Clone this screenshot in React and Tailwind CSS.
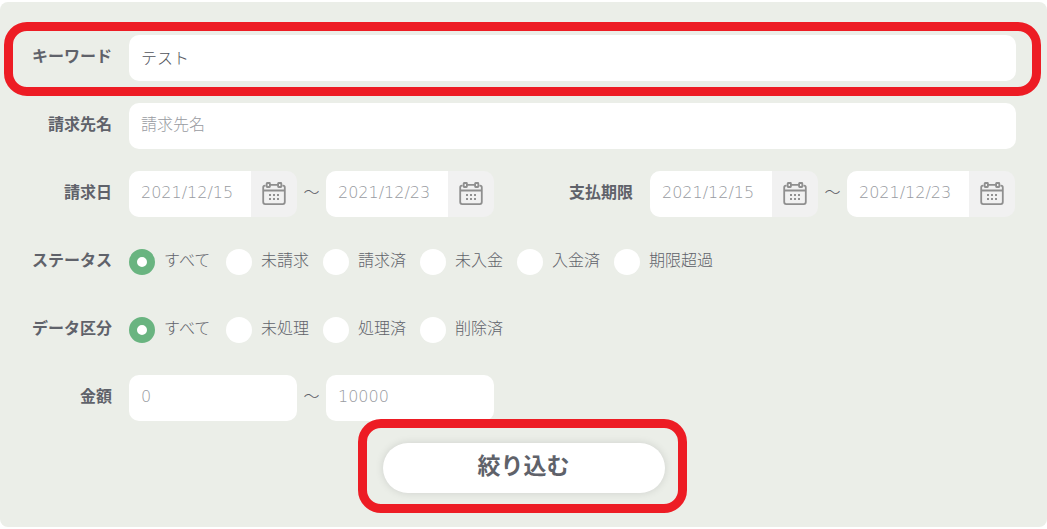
import { useId } from "react";

const INPUT_TEXT =
  "h-[46px] min-w-0 bg-white px-3 pb-[3px] font-light text-[#50535b] outline-none placeholder:text-[#989ba1]";

const TEXT_FIELD = `${INPUT_TEXT} rounded-[10px]`;

function CalendarIcon() {
  return (
    <svg viewBox="0 0 24 24" className="size-6" fill="none" stroke="#8f8f8f" strokeWidth="1.8" aria-hidden="true">
      <path d="M3.600 3.700H3a1.800 1.800 0 0 0-1.800 1.800v14.600a2 2 0 0 0 2 2h17.600a2 2 0 0 0 2-2V5.500a1.800 1.800 0 0 0-1.800-1.800h-.6" />
      <path d="M7.800 2.900h8.400M1.200 8.500h21.600" />
      <rect x="4.700" y="1" width="3.200" height="4" rx="0.400" />
      <rect x="16.100" y="1" width="3.200" height="4" rx="0.400" />
      <g fill="#919191" stroke="none">
        <rect x="7" y="12" width="2" height="2" />
        <rect x="11" y="12" width="2" height="2" />
        <rect x="15" y="12" width="2" height="2" />
        <rect x="7" y="16" width="2" height="2" />
        <rect x="11" y="16" width="2" height="2" />
        <rect x="15" y="16" width="2" height="2" />
      </g>
    </svg>
  );
}

function Row({ label, htmlFor, id, children }) {
  const text = "w-[112px] shrink-0 pb-[2px] text-right font-bold";
  return (
    <div className="flex h-[46px] items-center gap-[17px]">
      {htmlFor ? (
        <label htmlFor={htmlFor} className={text}>{label}</label>
      ) : (
        <span id={id} className={text}>{label}</span>
      )}
      {children}
    </div>
  );
}

function TextRow({ label, ...props }) {
  const id = useId();
  return (
    <Row label={label} htmlFor={id}>
      <input id={id} type="text" className={`${TEXT_FIELD} mr-[31px] flex-1`} {...props} />
    </Row>
  );
}

function Tilde() {
  return <span className="w-[29px] shrink-0 pb-[2px] text-center font-light">～</span>;
}

function DateField({ id, placeholder, label }) {
  return (
    <div className="flex w-[168px] overflow-hidden rounded-[10px] bg-[#f1f1f1]">
      <input
        id={id}
        type="text"
        placeholder={placeholder}
        aria-label={label}
        className={`${INPUT_TEXT} flex-1`}
      />
      <button type="button" aria-label={`${label}を選択`} className="flex w-[46px] items-center justify-center">
        <CalendarIcon />
      </button>
    </div>
  );
}

function DateRange({ label }) {
  const id = useId();
  return (
    <Row label={label} htmlFor={id}>
      <div className="flex items-center">
        <DateField id={id} placeholder="2021/12/15" label={`${label} 開始`} />
        <Tilde />
        <DateField placeholder="2021/12/23" label={`${label} 終了`} />
      </div>
    </Row>
  );
}

function RadioRow({ label, name, options }) {
  const id = useId();
  return (
    <Row label={label} id={id}>
      <div role="radiogroup" aria-labelledby={id} className="flex gap-[14px]">
        {options.map((option, i) => (
          <label key={option} className="flex items-center gap-[9px] font-light">
            <input
              type="radio"
              name={name}
              defaultChecked={i === 0}
              className="size-[26px] appearance-none rounded-full border-white bg-white checked:border-[8px] checked:border-[#69b480]"
            />
            <span className="min-w-12 pb-[3px]">{option}</span>
          </label>
        ))}
      </div>
    </Row>
  );
}

function Highlight({ className }) {
  return (
    <div
      aria-hidden="true"
      className={`pointer-events-none absolute rounded-[23px] border-[9px] border-[#ed1c24] ${className}`}
    />
  );
}

export default function App() {
  const amountId = useId();
  return (
    <main className="bg-white py-[2px] font-['DejaVu_Sans','Noto_Sans_CJK_JP',sans-serif] text-base text-[#5f626a]">
      <form
        onSubmit={(e) => e.preventDefault()}
        className="flex flex-col gap-[22px] rounded-[8px] bg-[#ebeee8] pt-[33px] pb-[34px]"
      >
        <div className="relative">
          <TextRow label="キーワード" defaultValue="テスト" />
          <Highlight className="-top-[13px] right-[6px] -bottom-[15px] left-[4px]" />
        </div>
        <TextRow label="請求先名" placeholder="請求先名" />
        <div className="grid grid-cols-2 pr-[5px]">
          <DateRange label="請求日" />
          <DateRange label="支払期限" />
        </div>
        <RadioRow
          label="ステータス"
          name="status"
          options={["すべて", "未請求", "請求済", "未入金", "入金済", "期限超過"]}
        />
        <RadioRow label="データ区分" name="kind" options={["すべて", "未処理", "処理済", "削除済"]} />
        <Row label="金額" htmlFor={amountId}>
          <div className="flex items-center">
            <input id={amountId} type="text" placeholder="0" className={`${TEXT_FIELD} w-[168px]`} />
            <Tilde />
            <input type="text" placeholder="10000" aria-label="金額 上限" className={`${TEXT_FIELD} w-[168px]`} />
          </div>
        </Row>
        <div className="relative mx-auto">
          <button
            type="submit"
            className="block h-[50px] w-[282px] rounded-full bg-white pb-[3px] text-[23px] leading-none font-bold shadow-[0_0_8px_rgba(0,0,0,0.12)]"
          >
            絞り込む
          </button>
          <Highlight className="-top-[24px] -right-[22px] -bottom-[20px] -left-[25px]" />
        </div>
      </form>
    </main>
  );
}
